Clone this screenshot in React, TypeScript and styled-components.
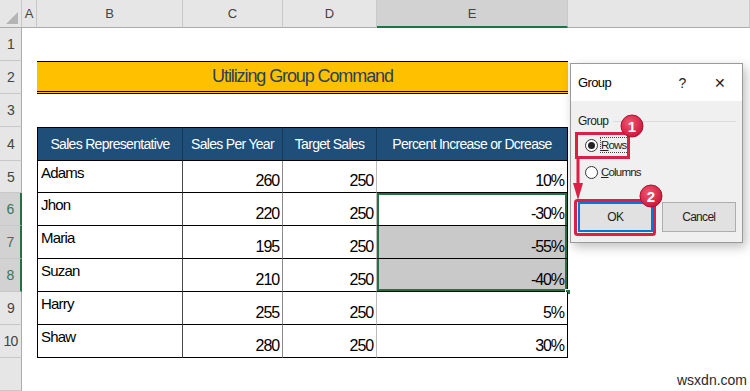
import React from "react"
import styled, { createGlobalStyle, css } from "styled-components"

const GlobalStyle = createGlobalStyle`
  html, body {
    margin: 0;
    padding: 0;
    background: #ffffff;
  }
  * {
    box-sizing: border-box;
  }
`

const sans = `"Liberation Sans", Arial, sans-serif`
const green = "#217346"
const red = "#DB1F45"

const Page = styled.div`
  position: relative;
  width: 750px;
  height: 391px;
  overflow: hidden;
  background: #ffffff;
  font-family: ${sans};
`

const Row = styled.div<{ $h?: number }>`
  display: grid;
  grid-template-columns: 22px 15px 146px 100px 94px 191px 1fr;
  height: ${(p) => p.$h ?? 33}px;
`

const ColHead = styled.div<{ $selected?: boolean; $corner?: boolean }>`
  position: relative;
  background: ${(p) => (p.$selected ? "#D2D2D2" : "#E6E6E6")};
  border-right: 1px solid #c8c8c8;
  border-bottom: ${(p) => (p.$selected ? `2px solid ${green}` : "1px solid #ababab")};
  display: flex;
  align-items: center;
  justify-content: center;
  font-size: 13px;
  color: #444;
  ${(p) =>
    p.$corner &&
    css`
      &::after {
        content: "";
        position: absolute;
        right: 3px;
        bottom: 3px;
        border-left: 12px solid transparent;
        border-bottom: 12px solid #b4b4b4;
      }
    `}
`

const RowHead = styled.div<{ $selected?: boolean }>`
  background: ${(p) => (p.$selected ? "#D2D2D2" : "#E6E6E6")};
  border-right: ${(p) => (p.$selected ? `2px solid ${green}` : "1px solid #ababab")};
  border-bottom: 1px solid #c8c8c8;
  display: flex;
  align-items: center;
  justify-content: center;
  font-size: 14px;
  letter-spacing: -0.8px;
  color: ${(p) => (p.$selected ? "#3c7255" : "#444")};
`

const Blank = styled.div``

const TitleCell = styled.div`
  grid-column: 3 / span 4;
  background: #ffc000;
  border-top: 1px solid #000;
  border-bottom: 3px double #000;
  display: flex;
  align-items: center;
  justify-content: center;
  font-size: 18px;
  letter-spacing: -1.1px;
  color: #2b4257;
`

const HeadCell = styled.div<{ $last?: boolean; $first?: boolean }>`
  background: #1f4e78;
  border-top: 1px solid #000;
  border-bottom: 1px solid #000;
  border-left: ${(p) => (p.$first ? "1px solid #000" : "none")};
  border-right: 1px solid ${(p) => (p.$last ? "#000" : "#16395a")};
  display: flex;
  align-items: center;
  justify-content: center;
  font-size: 14px;
  letter-spacing: -0.7px;
  color: #ffffff;
  white-space: nowrap;
`

type Edge = "dark" | "mid" | "light" | "black"
const edgeColor: Record<Edge, string> = {
  dark: "#4a4a4a",
  mid: "#8c8c8c",
  light: "#bdbdbd",
  black: "#000000",
}

const Cell = styled.div<{
  $edge: Edge
  $first?: boolean
  $num?: boolean
  $shade?: boolean
  $sel?: "top" | "mid" | "bottom"
}>`
  position: relative;
  display: flex;
  padding: ${(p) => (p.$num ? "0 3px 2px 0" : "3px 0 0 3px")};
  align-items: ${(p) => (p.$num ? "flex-end" : "flex-start")};
  justify-content: ${(p) => (p.$num ? "flex-end" : "flex-start")};
  background: ${(p) => (p.$shade ? "#c9c9c9" : "#ffffff")};
  border-bottom: 1px solid #000;
  border-left: ${(p) => (p.$first ? "1px solid #000" : "none")};
  border-right: 1px solid ${(p) => edgeColor[p.$edge]};
  font-size: ${(p) => (p.$num ? "16px" : "15px")};
  letter-spacing: ${(p) => (p.$num ? "-1.1px" : "-0.8px")};
  color: #000;
  ${(p) =>
    p.$sel &&
    css`
      box-shadow: inset 2px 0 0 ${green}, inset -2px 0 0 ${green}
        ${p.$sel === "top" ? `, inset 0 2px 0 ${green}` : ""}
        ${p.$sel === "bottom" ? `, inset 0 -2px 0 ${green}` : ""};
    `}
`

const FillHandle = styled.span`
  position: absolute;
  right: -4px;
  bottom: -4px;
  width: 6px;
  height: 6px;
  background: ${green};
  border: 1px solid #fff;
`

const Dialog = styled.div`
  position: absolute;
  left: 570px;
  top: 63px;
  width: 173px;
  height: 180px;
  background: #f0f0f0;
  border: 1px solid #9a9a9a;
  box-shadow: 3px 4px 10px rgba(0, 0, 0, 0.25);
  display: flex;
  flex-direction: column;
  color: #000;
`

const TitleBar = styled.div`
  height: 37px;
  background: #ffffff;
  display: flex;
  align-items: center;
  padding: 0 0 0 7px;
  font-size: 13px;
  letter-spacing: -0.6px;
`

const TitleText = styled.span`
  flex: 1;
`

const TitleIcon = styled.span<{ $w: number }>`
  width: ${(p) => p.$w}px;
  text-align: center;
  font-size: 14px;
  color: #222;
`

const Body = styled.div`
  flex: 1;
  display: flex;
  flex-direction: column;
  padding: 12px 6px 10px 7px;
`

const GroupLabel = styled.div`
  display: flex;
  align-items: center;
  gap: 5px;
  height: 16px;
  font-size: 12px;
  letter-spacing: -0.6px;
  color: #222;
  &::after {
    content: "";
    flex: 1;
    height: 1px;
    background: #dcdcdc;
  }
`

const RadioRow = styled.div`
  display: flex;
  align-items: center;
  gap: 2px;
  height: 22px;
  margin-top: 5px;
  padding-left: 7px;
  font-size: 11.5px;
  letter-spacing: -0.8px;
  color: #222;
  &:first-of-type {
    margin-top: 6px;
  }
`

const Radio = styled.span<{ $on?: boolean }>`
  width: 13px;
  height: 13px;
  border-radius: 50%;
  border: 1px solid #333;
  background: #fff;
  display: flex;
  align-items: center;
  justify-content: center;
  &::after {
    content: "";
    width: 7px;
    height: 7px;
    border-radius: 50%;
    background: ${(p) => (p.$on ? "#222" : "transparent")};
  }
`

const RadioLabel = styled.span<{ $focus?: boolean }>`
  padding: 1px 1px 1px 0;
  border: 1px dotted ${(p) => (p.$focus ? "#444" : "transparent")};
  u {
    text-decoration: underline;
  }
`

const Buttons = styled.div`
  display: flex;
  gap: 9px;
  margin-top: 19px;
`

const DlgButton = styled.div<{ $focus?: boolean }>`
  width: 75px;
  height: 30px;
  background: #e1e1e1;
  border: ${(p) => (p.$focus ? "2px solid #0078d7" : "1px solid #adadad")};
  display: flex;
  align-items: center;
  justify-content: center;
  font-size: 12px;
  letter-spacing: -0.7px;
  color: #222;
`

const Overlay = styled.svg`
  position: absolute;
  left: 0;
  top: 0;
  pointer-events: none;
`

const Watermark = styled.div`
  position: absolute;
  left: 677px;
  top: 372px;
  font-size: 14px;
  color: #2a2a2a;
`

type Rec = { name: string; sales: number; target: number; pct: string }

const data: Rec[] = [
  { name: "Adams", sales: 260, target: 250, pct: "10%" },
  { name: "Jhon", sales: 220, target: 250, pct: "-30%" },
  { name: "Maria", sales: 195, target: 250, pct: "-55%" },
  { name: "Suzan", sales: 210, target: 250, pct: "-40%" },
  { name: "Harry", sales: 255, target: 250, pct: "5%" },
  { name: "Shaw", sales: 280, target: 250, pct: "30%" },
]

const selOf = (i: number): "top" | "mid" | "bottom" | undefined => {
  if (i === 1) return "top"
  if (i === 2) return "mid"
  if (i === 3) return "bottom"
  return undefined
}

const Badge = ({ cx, cy, n }: { cx: number; cy: number; n: string }) => (
  <g>
    <circle cx={cx} cy={cy} r={11} fill="url(#badge)" stroke="#b0102e" strokeWidth={1} />
    <text
      x={cx}
      y={cy + 5.5}
      textAnchor="middle"
      fontFamily="Liberation Sans, Arial, sans-serif"
      fontWeight="bold"
      fontSize="15"
      fill="#fff"
    >
      {n}
    </text>
  </g>
)

const App = () => {
  return (
    <Page>
      <GlobalStyle />
      <Row $h={28}>
        <ColHead $corner />
        <ColHead>A</ColHead>
        <ColHead>B</ColHead>
        <ColHead>C</ColHead>
        <ColHead>D</ColHead>
        <ColHead $selected>E</ColHead>
        <ColHead />
      </Row>
      <Row>
        <RowHead>1</RowHead>
      </Row>
      <Row>
        <RowHead>2</RowHead>
        <Blank />
        <TitleCell>Utilizing Group Command</TitleCell>
      </Row>
      <Row>
        <RowHead>3</RowHead>
      </Row>
      <Row $h={34}>
        <RowHead>4</RowHead>
        <Blank />
        <HeadCell $first>Sales Representative</HeadCell>
        <HeadCell>Sales Per Year</HeadCell>
        <HeadCell>Target Sales</HeadCell>
        <HeadCell $last>Percent Increase or Dcrease</HeadCell>
      </Row>
      {data.map((r, i) => (
        <Row key={r.name} $h={i === 0 ? 32 : 33}>
          <RowHead $selected={i >= 1 && i <= 3}>{i + 5}</RowHead>
          <Blank />
          <Cell $edge="dark" $first>
            {r.name}
          </Cell>
          <Cell $edge="mid" $num>
            {r.sales}
          </Cell>
          <Cell $edge="light" $num>
            {r.target}
          </Cell>
          <Cell $edge="black" $num $shade={i === 2 || i === 3} $sel={selOf(i)}>
            {r.pct}
            {i === 3 && <FillHandle />}
          </Cell>
        </Row>
      ))}
      <Row>
        <RowHead />
      </Row>

      <Dialog>
        <TitleBar>
          <TitleText>Group</TitleText>
          <TitleIcon $w={32}>?</TitleIcon>
          <TitleIcon $w={44}>✕</TitleIcon>
        </TitleBar>
        <Body>
          <GroupLabel>Group</GroupLabel>
          <RadioRow>
            <Radio $on />
            <RadioLabel $focus>
              <u>R</u>ows
            </RadioLabel>
          </RadioRow>
          <RadioRow>
            <Radio />
            <RadioLabel>
              <u>C</u>olumns
            </RadioLabel>
          </RadioRow>
          <Buttons>
            <DlgButton $focus>OK</DlgButton>
            <DlgButton>Cancel</DlgButton>
          </Buttons>
        </Body>
      </Dialog>

      <Overlay width={750} height={391} viewBox="0 0 750 391">
        <defs>
          <radialGradient id="badge" cx="40%" cy="35%" r="70%">
            <stop offset="0%" stopColor="#f2566f" />
            <stop offset="100%" stopColor="#c8143a" />
          </radialGradient>
        </defs>
        <rect x={576.5} y={133.5} width={52} height={24} fill="none" stroke={red} strokeWidth={3} />
        <line x1={578} y1={158} x2={578} y2={186} stroke={red} strokeWidth={3} />
        <polygon points="573,183 583,183 578,200" fill={red} />
        <rect x={575.5} y={200.5} width={79} height={34} rx={2} fill="none" stroke={red} strokeWidth={3} />
        <Badge cx={632} cy={126} n="1" />
        <Badge cx={651} cy={196} n="2" />
      </Overlay>

      <Watermark>wsxdn.com</Watermark>
    </Page>
  )
}

export default App
